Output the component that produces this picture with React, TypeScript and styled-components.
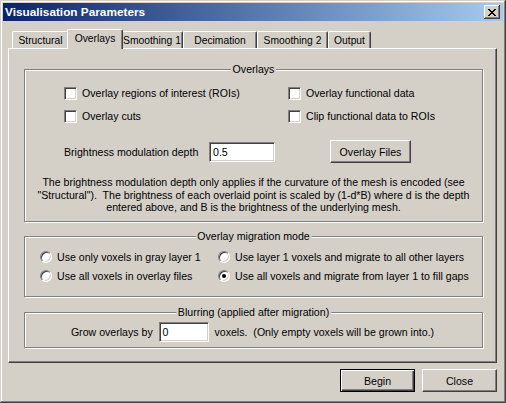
import React from "react";
import styled, { createGlobalStyle, css } from "styled-components";

const FACE = "#d4d0c8";
const SHADOW = "#808080";
const DARK = "#404040";
const LIGHT = "#ffffff";

const Global = createGlobalStyle`
  html, body { margin: 0; padding: 0; background: ${FACE}; }
  body { font-family: "Liberation Sans", Arial, sans-serif; font-size: 10.6px; color: #000; }
  * { box-sizing: border-box; }
`;

const Window = styled.div`
  width: 506px;
  height: 403px;
  background: ${FACE};
  padding: 3px;
  display: flex;
  flex-direction: column;
  box-shadow: inset -1px -1px ${DARK}, inset 1px 1px ${FACE}, inset -2px -2px ${SHADOW}, inset 2px 2px ${LIGHT};
`;

const TitleBar = styled.div`
  height: 18px;
  flex: none;
  display: flex;
  align-items: center;
  justify-content: space-between;
  padding: 0 3px 0 2px;
  background: linear-gradient(to right, #0a246a, #a6caf0);
`;

const Title = styled.span`
  color: #fff;
  font-weight: bold;
  font-size: 11.8px;
  font-family: "Liberation Sans", Arial, sans-serif;
`;

const CloseBox = styled.div`
  width: 16px;
  height: 14px;
  background: ${FACE};
  display: flex;
  align-items: center;
  justify-content: center;
  box-shadow: inset -1px -1px ${DARK}, inset 1px 1px ${LIGHT}, inset -2px -2px ${SHADOW};
`;

const Body = styled.div`
  flex: 1;
  display: flex;
  flex-direction: column;
  padding: 8px 6px 0 5px;
`;

const TabRow = styled.div`
  height: 20px;
  margin-bottom: -1px;
  padding-left: 4px;
  display: flex;
  align-items: flex-start;
  position: relative;
  z-index: 1;
`;

const Tab = styled.div<{ $w: number; $active?: boolean }>`
  width: ${(p) => p.$w}px;
  height: 17px;
  margin-top: 2px;
  display: flex;
  align-items: center;
  justify-content: center;
  white-space: nowrap;
  font-size: 10.3px;
  background: ${FACE};
  border-top: 1px solid ${LIGHT};
  border-left: 1px solid ${LIGHT};
  border-right: 1px solid ${DARK};
  border-radius: 2px 2px 0 0;
  box-shadow: inset -1px 0 ${SHADOW};
  ${(p) =>
    p.$active &&
    css`
      width: ${p.$w + 4}px;
      height: 20px;
      margin: 0 -2px;
      padding-bottom: 2px;
      position: relative;
      z-index: 2;
    `}
`;

const Panel = styled.div`
  height: 315px;
  display: flex;
  flex-direction: column;
  padding: 20px 13px 0 15px;
  border-top: 1px solid ${LIGHT};
  border-left: 1px solid ${LIGHT};
  border-right: 1px solid ${DARK};
  border-bottom: 1px solid ${DARK};
  box-shadow: inset -1px -1px ${SHADOW};
`;

const Group = styled.div<{ $h: number; $mt?: number }>`
  position: relative;
  height: ${(p) => p.$h}px;
  margin-top: ${(p) => p.$mt ?? 0}px;
  border: 1px solid ${SHADOW};
  box-shadow: inset 1px 1px ${LIGHT}, 1px 1px ${LIGHT};
  display: flex;
  flex-direction: column;
`;

const GroupTitle = styled.span`
  position: absolute;
  top: -7px;
  left: 50%;
  transform: translateX(-50%);
  padding: 0 2px;
  line-height: 13px;
  background: ${FACE};
  white-space: nowrap;
`;

const TwoCol = styled.div<{ $col: number; $gap: number; $pt: number; $pl: number }>`
  display: grid;
  grid-template-columns: ${(p) => p.$col}px auto;
  grid-auto-rows: 16px;
  row-gap: ${(p) => p.$gap}px;
  padding: ${(p) => p.$pt}px 0 0 ${(p) => p.$pl}px;
`;

const Choice = styled.label`
  display: flex;
  align-items: center;
  gap: 5px;
  white-space: nowrap;
`;

const CheckBox = styled.span`
  width: 13px;
  height: 13px;
  flex: none;
  background: #fff;
  border: 1px solid;
  border-color: ${SHADOW} ${LIGHT} ${LIGHT} ${SHADOW};
  box-shadow: inset 1px 1px ${DARK}, inset -1px -1px ${FACE};
`;

const Radio = styled.span<{ $checked?: boolean }>`
  width: 12px;
  height: 12px;
  flex: none;
  border-radius: 50%;
  background: #fff;
  border: 1px solid;
  border-color: ${SHADOW} ${LIGHT} ${LIGHT} ${SHADOW};
  box-shadow: inset 1px 1px ${DARK}, inset -1px -1px ${FACE};
  display: flex;
  align-items: center;
  justify-content: center;
  &::after {
    content: "";
    width: 4px;
    height: 4px;
    border-radius: 50%;
    background: ${(p) => (p.$checked ? "#000" : "transparent")};
  }
`;

const BrightRow = styled.div`
  margin: 16px 0 0 39px;
  height: 23px;
  display: flex;
  align-items: center;
`;

const FieldLabel = styled.span<{ $w?: number }>`
  width: ${(p) => (p.$w ? `${p.$w}px` : "auto")};
  white-space: pre;
`;

const TextInput = styled.div<{ $w: number }>`
  width: ${(p) => p.$w}px;
  height: 20px;
  background: #fff;
  padding: 0 3px;
  display: flex;
  align-items: center;
  border: 1px solid;
  border-color: ${SHADOW} ${LIGHT} ${LIGHT} ${SHADOW};
  box-shadow: inset 1px 1px ${DARK}, inset -1px -1px ${FACE};
`;

const Button = styled.div<{ $w: number; $default?: boolean; $ml?: number }>`
  width: ${(p) => p.$w}px;
  height: 23px;
  margin-left: ${(p) => p.$ml ?? 0}px;
  display: flex;
  align-items: center;
  justify-content: center;
  background: ${FACE};
  ${(p) =>
    p.$default
      ? css`
          border: 1px solid #000;
          box-shadow: inset 1px 1px ${LIGHT}, inset -1px -1px ${DARK}, inset -2px -2px ${SHADOW};
        `
      : css`
          border: 1px solid;
          border-color: ${LIGHT} ${DARK} ${DARK} ${LIGHT};
          box-shadow: inset -1px -1px ${SHADOW}, inset 1px 1px ${FACE};
        `}
`;

const Description = styled.div`
  margin-top: 13px;
  text-align: center;
  line-height: 12.5px;
  white-space: pre;
`;

const GrowRow = styled.div`
  padding-top: 9px;
  height: 29px;
  display: flex;
  align-items: center;
  justify-content: center;
  gap: 0;
  padding-right: 2px;
`;

const Footer = styled.div`
  margin-top: 6px;
  display: flex;
  justify-content: flex-end;
  gap: 7px;
`;

const tabs: [string, number][] = [
  ["Structural", 57],
  ["Overlays", 52],
  ["Smoothing 1", 62],
  ["Decimation", 74],
  ["Smoothing 2", 71],
  ["Output", 43],
];

export default function App() {
  return (
    <>
      <Global />
      <Window>
        <TitleBar>
          <Title>Visualisation Parameters</Title>
          <CloseBox>
            <svg width="8" height="7" viewBox="0 0 8 7" shapeRendering="crispEdges">
              <path
                d="M0 0h2v1H0zM6 0h2v1H6zM1 1h2v1H1zM5 1h2v1H5zM2 2h4v1H2zM3 3h2v1H3zM2 4h4v1H2zM1 5h2v1H1zM5 5h2v1H5zM0 6h2v1H0zM6 6h2v1H6z"
                fill="#000"
              />
            </svg>
          </CloseBox>
        </TitleBar>
        <Body>
          <TabRow>
            {tabs.map(([t, w]) => (
              <Tab key={t} $w={w} $active={t === "Overlays"}>
                {t}
              </Tab>
            ))}
          </TabRow>
          <Panel>
            <Group $h={153}>
              <GroupTitle>Overlays</GroupTitle>
              <TwoCol $col={224} $gap={7} $pt={15} $pl={39}>
                <Choice>
                  <CheckBox />
                  Overlay regions of interest (ROIs)
                </Choice>
                <Choice>
                  <CheckBox />
                  Overlay functional data
                </Choice>
                <Choice>
                  <CheckBox />
                  Overlay cuts
                </Choice>
                <Choice>
                  <CheckBox />
                  Clip functional data to ROIs
                </Choice>
              </TwoCol>
              <BrightRow>
                <FieldLabel $w={145}>Brightness modulation depth</FieldLabel>
                <TextInput $w={66}>0.5</TextInput>
                <Button $w={81} $ml={55}>
                  Overlay Files
                </Button>
              </BrightRow>
              <Description>
                {
                  'The brightness modulation depth only applies if the curvature of the mesh is encoded (see\n"Structural").  The brightness of each overlaid point is scaled by (1-d*B) where d is the depth\nentered above, and B is the brightness of the underlying mesh.'
                }
              </Description>
            </Group>
            <Group $h={61} $mt={14}>
              <GroupTitle>Overlay migration mode</GroupTitle>
              <TwoCol $col={178} $gap={3} $pt={12} $pl={15}>
                <Choice>
                  <Radio />
                  Use only voxels in gray layer 1
                </Choice>
                <Choice>
                  <Radio />
                  Use layer 1 voxels and migrate to all other layers
                </Choice>
                <Choice>
                  <Radio />
                  Use all voxels in overlay files
                </Choice>
                <Choice>
                  <Radio $checked />
                  Use all voxels and migrate from layer 1 to fill gaps
                </Choice>
              </TwoCol>
            </Group>
            <Group $h={36} $mt={15}>
              <GroupTitle>Blurring (applied after migration)</GroupTitle>
              <GrowRow>
                <FieldLabel>{"Grow overlays by  "}</FieldLabel>
                <TextInput $w={50}>0</TextInput>
                <FieldLabel>{"  voxels.  (Only empty voxels will be grown into.)"}</FieldLabel>
              </GrowRow>
            </Group>
          </Panel>
          <Footer>
            <Button $w={75} $default>
              Begin
            </Button>
            <Button $w={75}>Close</Button>
          </Footer>
        </Body>
      </Window>
    </>
  );
}
